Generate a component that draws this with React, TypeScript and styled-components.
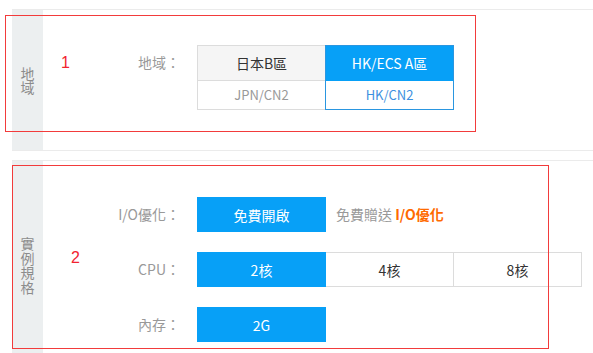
import React, { useState } from "react";
import styled, { createGlobalStyle } from "styled-components";

const GlobalStyle = createGlobalStyle`
  html, body {
    margin: 0;
    padding: 0;
    background: #fff;
  }
  body {
    font-family: "Noto Sans CJK TC", "Noto Sans", sans-serif;
    font-size: 14px;
    color: #333;
  }
`;

const BLUE = "#07a0f7";

const Page = styled.div`
  position: relative;
  width: 593px;
  height: 353px;
  overflow: hidden;
  padding-top: 9px;
  box-sizing: border-box;
`;

const Section = styled.section<{ $gap?: number }>`
  display: flex;
  margin-left: 12px;
  margin-top: ${(p) => p.$gap || 0}px;
  border-top: 1px solid #ebebeb;
  border-bottom: 1px solid #ebebeb;
`;

const SideTitle = styled.div`
  width: 31px;
  flex: none;
  background: #eceff0;
  color: #8c8c8c;
  font-size: 14px;
  line-height: 14.5px;
  display: flex;
  align-items: center;
  justify-content: center;
  text-align: center;
  word-break: break-all;
  padding: 0 8px;
  box-sizing: border-box;
`;

const Body = styled.div<{ $pt: number; $pb: number }>`
  flex: 1;
  display: flex;
  flex-direction: column;
  gap: 20px;
  padding-top: ${(p) => p.$pt}px;
  padding-bottom: ${(p) => p.$pb}px;
`;

const Row = styled.div`
  display: flex;
  align-items: flex-start;
`;

const Label = styled.div`
  width: 137px;
  padding-right: 17px;
  text-align: right;
  color: #999;
  font-size: 14px;
  line-height: 35px;
  white-space: nowrap;
  flex: none;
`;

const Options = styled.div`
  display: flex;
  align-items: center;
`;

const Option = styled.button<{ $active?: boolean }>`
  width: 129px;
  height: 35px;
  margin: 0;
  margin-left: -1px;
  padding: 0;
  border: 1px solid ${(p) => (p.$active ? BLUE : "#dcdcdc")};
  background: ${(p) => (p.$active ? BLUE : "#fff")};
  color: ${(p) => (p.$active ? "#fff" : "#333")};
  font-family: inherit;
  font-size: 14px;
  cursor: pointer;
  position: relative;
  z-index: ${(p) => (p.$active ? 1 : 0)};

  &:first-child {
    margin-left: 0;
  }
`;

const RegionGrid = styled.div`
  display: flex;
`;

const RegionCell = styled.div<{ $active?: boolean }>`
  width: 129px;
  display: flex;
  flex-direction: column;
  cursor: pointer;
  border: 1px solid ${(p) => (p.$active ? "#2a96e0" : "#dcdcdc")};
  margin-left: -1px;
  position: relative;
  z-index: ${(p) => (p.$active ? 1 : 0)};
  box-sizing: border-box;

  &:first-child {
    margin-left: 0;
  }
`;

const RegionName = styled.div<{ $active?: boolean }>`
  height: 34px;
  line-height: 34px;
  text-align: center;
  font-size: 14px;
  background: ${(p) => (p.$active ? BLUE : "#f5f5f5")};
  color: ${(p) => (p.$active ? "#fff" : "#333")};
  border-bottom: 1px solid ${(p) => (p.$active ? BLUE : "#dcdcdc")};
`;

const RegionSub = styled.div<{ $active?: boolean }>`
  height: 28px;
  line-height: 28px;
  text-align: center;
  font-size: 13px;
  background: #fff;
  color: ${(p) => (p.$active ? "#3d8fe0" : "#999")};
`;

const Hint = styled.span`
  margin-left: 10px;
  line-height: 35px;
  color: #999;
  font-size: 14px;

  b {
    color: #ff6a00;
    font-weight: 700;
  }
`;

const Mark = styled.div<{ $x: number; $y: number; $w: number; $h: number }>`
  position: absolute;
  left: ${(p) => p.$x}px;
  top: ${(p) => p.$y}px;
  width: ${(p) => p.$w}px;
  height: ${(p) => p.$h}px;
  border: 1px solid #f23b3b;
  box-sizing: border-box;
  pointer-events: none;
`;

const MarkNum = styled.span<{ $x: number; $y: number }>`
  position: absolute;
  left: ${(p) => p.$x}px;
  top: ${(p) => p.$y}px;
  color: #f2232f;
  font-family: "Liberation Sans", Arial, sans-serif;
  font-size: 16px;
  line-height: 18px;
  pointer-events: none;
`;

const regions = [
  { name: "日本B區", sub: "JPN/CN2" },
  { name: "HK/ECS A區", sub: "HK/CN2" },
];

const cpus = ["2核", "4核", "8核"];

export default function App() {
  const [region, setRegion] = useState(1);
  const [cpu, setCpu] = useState(0);

  return (
    <Page>
      <GlobalStyle />
      <Section>
        <SideTitle>地域</SideTitle>
        <Body $pt={35} $pb={40}>
          <Row>
            <Label>地域：</Label>
            <RegionGrid>
              {regions.map((r, i) => (
                <RegionCell key={r.name} $active={region === i} onClick={() => setRegion(i)}>
                  <RegionName $active={region === i}>{r.name}</RegionName>
                  <RegionSub $active={region === i}>{r.sub}</RegionSub>
                </RegionCell>
              ))}
            </RegionGrid>
          </Row>
        </Body>
      </Section>

      <Section $gap={9}>
        <SideTitle>實例規格</SideTitle>
        <Body $pt={36} $pb={27}>
          <Row>
            <Label>I/O優化：</Label>
            <Options>
              <Option $active>免費開啟</Option>
              <Hint>
                免費贈送 <b>I/O優化</b>
              </Hint>
            </Options>
          </Row>
          <Row>
            <Label>CPU：</Label>
            <Options>
              {cpus.map((c, i) => (
                <Option key={c} $active={cpu === i} onClick={() => setCpu(i)}>
                  {c}
                </Option>
              ))}
            </Options>
          </Row>
          <Row>
            <Label>內存：</Label>
            <Options>
              <Option $active>2G</Option>
            </Options>
          </Row>
        </Body>
      </Section>

      {/* annotation overlays */}
      <Mark $x={5} $y={15} $w={471} $h={117} />
      <MarkNum $x={61} $y={54}>1</MarkNum>
      <Mark $x={12} $y={165} $w={537} $h={184} />
      <MarkNum $x={71} $y={249}>2</MarkNum>
    </Page>
  );
}
